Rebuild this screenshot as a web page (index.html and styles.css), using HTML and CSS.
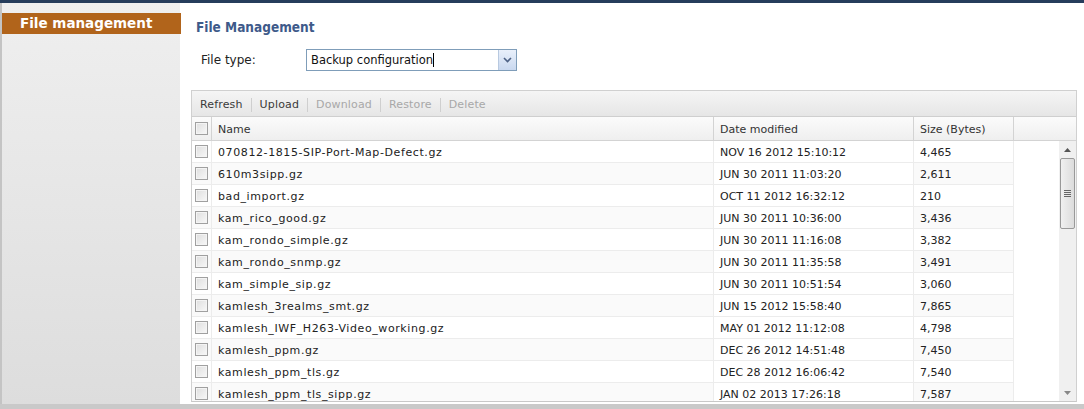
FILE: index.html
```html
<!DOCTYPE html>
<html>
<head>
<meta charset="utf-8">
<link rel="stylesheet" href="styles.css">
</head>
<body>
<div class="topbar"></div>
<div class="layout">
  <aside class="sidebar">
    <div class="nav-item">File management</div>
  </aside>
  <main class="main">
    <h1 class="title">File Management</h1>
    <div class="filetype">
      <label class="ft-label">File type:</label>
      <div class="select">
        <span class="select-text">Backup configuration</span><span class="caret"></span>
        <span class="select-btn"><svg width="9" height="6" viewBox="0 0 9 6"><path d="M1 1 L4.5 4.5 L8 1" fill="none" stroke="#4d6185" stroke-width="1.6"/></svg></span>
      </div>
    </div>
    <div class="grid">
      <div class="toolbar">
        <span class="tb">Refresh</span><span class="sep"></span>
        <span class="tb">Upload</span><span class="sep"></span>
        <span class="tb dis">Download</span><span class="sep"></span>
        <span class="tb dis">Restore</span><span class="sep"></span>
        <span class="tb dis">Delete</span>
      </div>
      <div class="head">
        <div class="hc c-chk"><span class="chk"></span></div>
        <div class="hc c-name">Name</div>
        <div class="hc c-date">Date modified</div>
        <div class="hc c-size">Size (Bytes)</div>
        <div class="hc c-fill"></div>
      </div>
      <div class="body">
        <div class="rows">
          <div class="row"><div class="c c-chk"><span class="chk"></span></div><div class="c c-name">070812-1815-SIP-Port-Map-Defect.gz</div><div class="c c-date">NOV 16 2012 15:10:12</div><div class="c c-size">4,465</div></div>
          <div class="row alt"><div class="c c-chk"><span class="chk"></span></div><div class="c c-name">610m3sipp.gz</div><div class="c c-date">JUN 30 2011 11:03:20</div><div class="c c-size">2,611</div></div>
          <div class="row"><div class="c c-chk"><span class="chk"></span></div><div class="c c-name">bad_import.gz</div><div class="c c-date">OCT 11 2012 16:32:12</div><div class="c c-size">210</div></div>
          <div class="row alt"><div class="c c-chk"><span class="chk"></span></div><div class="c c-name">kam_rico_good.gz</div><div class="c c-date">JUN 30 2011 10:36:00</div><div class="c c-size">3,436</div></div>
          <div class="row"><div class="c c-chk"><span class="chk"></span></div><div class="c c-name">kam_rondo_simple.gz</div><div class="c c-date">JUN 30 2011 11:16:08</div><div class="c c-size">3,382</div></div>
          <div class="row alt"><div class="c c-chk"><span class="chk"></span></div><div class="c c-name">kam_rondo_snmp.gz</div><div class="c c-date">JUN 30 2011 11:35:58</div><div class="c c-size">3,491</div></div>
          <div class="row"><div class="c c-chk"><span class="chk"></span></div><div class="c c-name">kam_simple_sip.gz</div><div class="c c-date">JUN 30 2011 10:51:54</div><div class="c c-size">3,060</div></div>
          <div class="row alt"><div class="c c-chk"><span class="chk"></span></div><div class="c c-name">kamlesh_3realms_smt.gz</div><div class="c c-date">JUN 15 2012 15:58:40</div><div class="c c-size">7,865</div></div>
          <div class="row"><div class="c c-chk"><span class="chk"></span></div><div class="c c-name">kamlesh_IWF_H263-Video_working.gz</div><div class="c c-date">MAY 01 2012 11:12:08</div><div class="c c-size">4,798</div></div>
          <div class="row alt"><div class="c c-chk"><span class="chk"></span></div><div class="c c-name">kamlesh_ppm.gz</div><div class="c c-date">DEC 26 2012 14:51:48</div><div class="c c-size">7,450</div></div>
          <div class="row"><div class="c c-chk"><span class="chk"></span></div><div class="c c-name">kamlesh_ppm_tls.gz</div><div class="c c-date">DEC 28 2012 16:06:42</div><div class="c c-size">7,540</div></div>
          <div class="row alt"><div class="c c-chk"><span class="chk"></span></div><div class="c c-name">kamlesh_ppm_tls_sipp.gz</div><div class="c c-date">JAN 02 2013 17:26:18</div><div class="c c-size">7,587</div></div>
        </div>
        <div class="spacer"></div>
        <div class="scrollbar">
          <span class="sb-up"><svg width="7" height="4" viewBox="0 0 7 4"><path d="M0 4 L3.5 0 L7 4 Z" fill="#555"/></svg></span>
          <span class="sb-thumb"><span class="grip"></span></span>
          <span class="sb-track"></span>
          <span class="sb-down"><svg width="7" height="4" viewBox="0 0 7 4"><path d="M0 0 L3.5 4 L7 0 Z" fill="#888"/></svg></span>
        </div>
      </div>
    </div>
  </main>
</div>
<div class="bottombar"></div>
</body>
</html>
```

FILE: styles.css
```css
* { box-sizing: border-box; }
html, body { margin: 0; padding: 0; }
body {
  width: 1084px;
  height: 409px;
  overflow: hidden;
  font-family: "DejaVu Sans", Verdana, sans-serif;
  font-size: 11px;
  color: #222;
  background: #fff;
}
.topbar { height: 3px; background: #263d5c; }
.layout { display: flex; height: 401px; }
.sidebar {
  width: 180px;
  flex: none;
  border-left: 2px solid #c4c4c4;
  background: linear-gradient(#efefef, #dddddd);
  padding-top: 10px;
}
.nav-item {
  height: 21px;
  width: 179px;
  background: #b1641b;
  color: #fff;
  font-weight: bold;
  font-size: 13.5px;
  line-height: 20px;
  padding-left: 18px;
}
.main { flex: 1; padding: 15px 7px 0 11px; }
.title {
  margin: 0 0 0 5px;
  font-family: "DejaVu Sans Condensed", "DejaVu Sans", sans-serif;
  font-size: 13.5px;
  font-weight: bold;
  color: #3e5a8a;
  line-height: 18px;
}
.filetype { display: flex; align-items: center; margin: 13px 0 0 10px; height: 22px; }
.ft-label { width: 105px; font-size: 12px; color: #222; }
.select {
  width: 211px;
  height: 22px;
  border: 1px solid #7f9db9;
  display: flex;
  align-items: center;
  background: #fff;
}
.select-text { padding-left: 4px; font-size: 11.5px; color: #111; }
.caret { width: 1px; height: 14px; background: #000; margin-left: 0; }
.select-btn {
  margin-left: auto;
  width: 18px;
  height: 20px;
  border-left: 1px solid #b8c9e0;
  background: linear-gradient(#e9f0fb, #c9d8ef);
  display: flex;
  align-items: center;
  justify-content: center;
}
.grid {
  margin-top: 19px;
  border: 1px solid #d0d0d0;
  border-bottom: 1px solid #c8c8c8;
  width: 886px;
}
.toolbar {
  height: 26px;
  background: linear-gradient(#f5f5f5, #e6e6e6);
  border-bottom: 1px solid #cfcfcf;
  display: flex;
  align-items: center;
  padding: 2px 0 0 8px;
}
.tb { color: #3a3a3a; font-size: 11px; letter-spacing: 0.15px; }
.tb.dis { color: #a8a8a8; }
.sep { width: 1px; height: 14px; background: #cfcfcf; margin: 0 8px; }
.head {
  display: flex;
  height: 24px;
  background: linear-gradient(#fbfbfb, #efefef);
  border-bottom: 1px solid #d3d3d3;
}
.hc {
  border-right: 1px solid #d3d3d3;
  display: flex;
  align-items: center;
  padding: 1px 0 0 6px;
  color: #333;
}
.c-chk { width: 20px; flex: none; padding-left: 3px !important; padding-top: 0 !important; }
.c-name { width: 502px; flex: none; }
.c-date { width: 200px; flex: none; }
.c-size { width: 100px; flex: none; }
.c-fill { flex: 1; border-right: none; }
.chk {
  display: inline-block;
  width: 13px;
  height: 13px;
  border: 1px solid #a0a0a0;
  background: linear-gradient(135deg, #dedede, #f8f8f8);
  box-shadow: inset 0 0 0 1px #f4f4f4;
}
.body { display: flex; height: 260px; overflow: hidden; }
.rows { width: 822px; flex: none; }
.row { display: flex; height: 22px; background: #fff; }
.row.alt { background: #fafafa; }
.c {
  height: 22px;
  border-right: 1px solid #ececec;
  border-bottom: 1px solid #ececec;
  display: flex;
  align-items: center;
  padding: 1px 0 0 6px;
  color: #222;
}
.row .c-name { letter-spacing: 0.6px; }
.row .c-date { background: #fff; }
.spacer { flex: 1; }
.scrollbar {
  width: 17px;
  flex: none;
  background: #f0f0f0;
  display: flex;
  flex-direction: column;
  align-items: center;
}
.sb-up, .sb-down { height: 17px; display: flex; align-items: center; justify-content: center; width: 17px; }
.sb-thumb {
  width: 15px;
  height: 71px;
  border: 1px solid #999;
  border-radius: 2px;
  background: linear-gradient(90deg, #f0f0f0, #dcdcdc);
  display: flex;
  align-items: center;
  justify-content: center;
}
.grip {
  width: 7px;
  height: 7px;
  background: repeating-linear-gradient(#666 0 1px, transparent 1px 2px);
}
.sb-track { flex: 1; }
.bottombar { height: 5px; background: #c9c9c9; }
```
